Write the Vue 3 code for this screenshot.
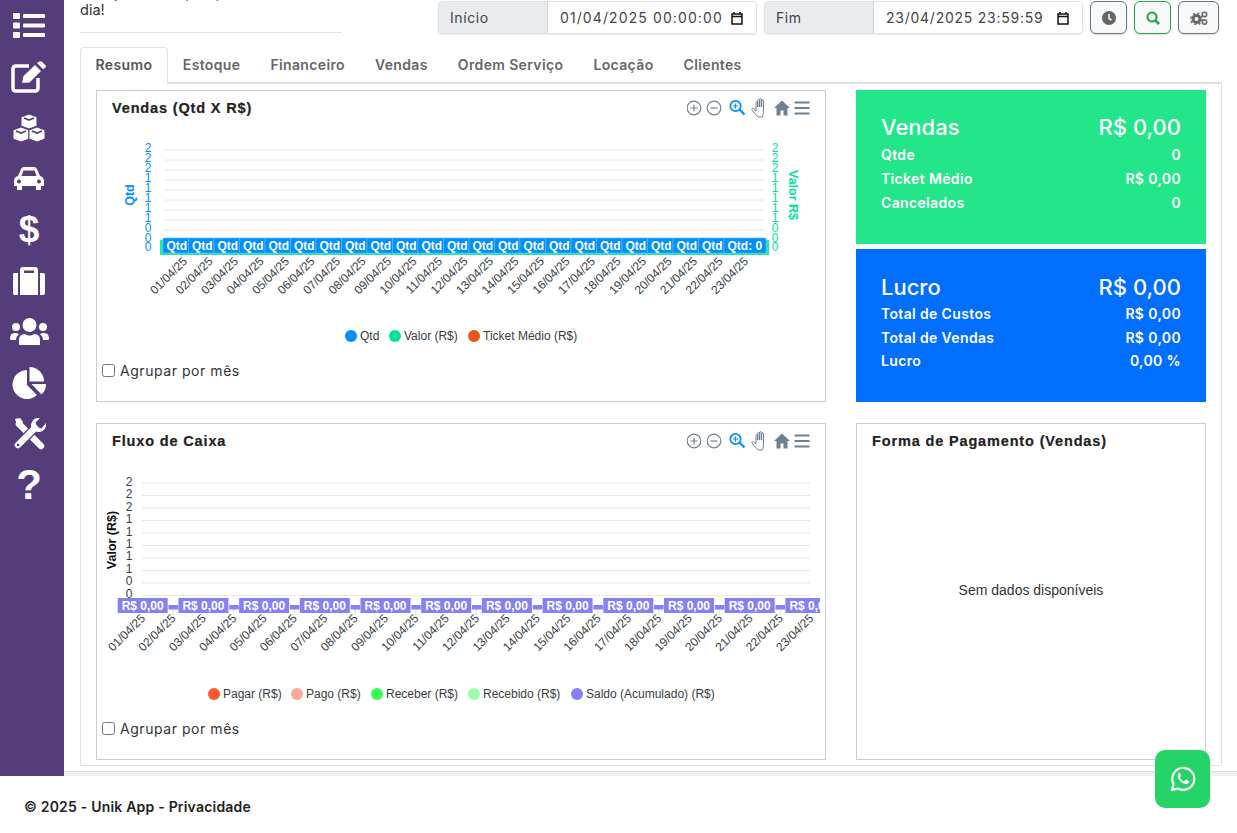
<script setup>
// as coordenadas dos gráficos seguem o viewBox de cada svg
const days = Array.from({ length: 23 }, (_, i) => String(i + 1).padStart(2, "0") + "/04/25");

const tabs = ["Resumo", "Estoque", "Financeiro", "Vendas", "Ordem Serviço", "Locação", "Clientes"];

const vendasTicks = [148, 158, 168, 178, 188, 198, 208, 218, 228, 238, 247].map((y, i) => ({
  y,
  label: ["2", "2", "2", "1", "1", "1", "1", "1", "0", "0", "0"][i],
}));
const vendasGrid = [150, 160, 170, 180, 190, 200, 210, 220, 230];
const vendasDays = days.map((d, i) => ({ d, x: 188 + i * 25.5, boxX: 163 + i * 25.5 }));
const vendasLegend = [
  { x: 351, color: "#008ffb", label: "Qtd" },
  { x: 395, color: "#00e396", label: "Valor (R$)" },
  { x: 474, color: "#e4571f", label: "Ticket Médio (R$)" },
];

const fluxoTicks = ["2", "2", "2", "1", "1", "1", "1", "1", "0", "0"].map((label, i) => ({
  label,
  y: 482 + i * 12.4,
}));
const fluxoGrid = Array.from({ length: 10 }, (_, i) => 483 + i * 12.5);
const fluxoDays = days.map((d, i) => ({ d, x: 146 + i * 30.37, boxX: 117.7 + (i / 2) * 60.7 }));
const fluxoLegend = [
  { x: 214, color: "#ff5733", label: "Pagar (R$)" },
  { x: 297, color: "#ffa899", label: "Pago (R$)" },
  { x: 377, color: "#33ff57", label: "Receber (R$)" },
  { x: 474, color: "#99ffab", label: "Recebido (R$)" },
  { x: 577, color: "#8680ff", label: "Saldo (Acumulado) (R$)" },
];

const vendasResumo = [
  ["Qtde", "0"],
  ["Ticket Médio", "R$ 0,00"],
  ["Cancelados", "0"],
];
const lucroResumo = [
  ["Total de Custos", "R$ 0,00"],
  ["Total de Vendas", "R$ 0,00"],
  ["Lucro", "0,00 %"],
];
</script>

<template>
  <svg class="defs" width="0" height="0">
    <symbol id="toolbar" viewBox="0 0 128 20">
      <g fill="none" stroke="#6e8192" stroke-width="1.2">
        <circle cx="7" cy="10" r="6.800" />
        <path d="M3.500 10h7M7 6.500v7" />
        <circle cx="27" cy="10" r="6.800" />
        <path d="M23.500 10h7" />
      </g>
      <g fill="none" stroke="#008ffb">
        <circle cx="48.500" cy="8" r="5.200" stroke-width="1.800" />
        <path d="M46 8h5M48.500 5.500v5" stroke-width="1.200" />
        <path d="M52.500 11.500l5 5" stroke-width="2.200" />
      </g>
      <path
        transform="translate(3.500 0)"
        d="M68 19c-2-1-4.500-4.500-6.500-7-.8-1 .6-2.200 1.600-1.200l2.400 2.200V4.500c0-1.400 1.800-1.400 1.800 0V9V2.300c0-1.400 1.900-1.400 1.900 0V9V1.700c0-1.400 1.900-1.400 1.900 0V9V3c0-1.400 1.900-1.400 1.900 0v10c0 2-.5 4.500-1 6z"
        fill="#fff"
        stroke="#6e8192"
        stroke-width="1"
      />
      <path d="M95 2.500L87 10h2.500v7.500h4v-5h3v5h4V10h2.500z" fill="#6e8192" />
      <path d="M107.500 4.500h15M107.500 10h15M107.500 15.500h15" stroke="#6e8192" stroke-width="2" />
    </symbol>
  </svg>

  <div class="page">
    <aside class="sidebar">
      <a class="side-item">
        <svg width="32" height="25" viewBox="0 0 32 25" fill="#fff">
          <rect x="0" y="0" width="7" height="6" rx="1" />
          <rect x="0" y="9.500" width="7" height="6" rx="1" />
          <rect x="0" y="19" width="7" height="6" rx="1" />
          <rect x="10" y="1" width="22" height="4" rx="1" />
          <rect x="10" y="10.500" width="22" height="4" rx="1" />
          <rect x="10" y="20" width="22" height="4" rx="1" />
        </svg>
      </a>
      <a class="side-item">
        <svg width="36" height="32" viewBox="0 0 36 32" fill="#fff">
          <path d="M18 5H5Q2 5 2 8v19q0 3 3 3h19q3 0 3-3V17" fill="none" stroke="#fff" stroke-width="3.500" />
          <path d="M11 22l1.500-7L24 4l6 6-11.500 11.500z" />
          <path d="M26 2l2.500-1.500q1.500-.8 2.500.2l3.500 3.500q1 1 0 2.300L32 8.200z" />
        </svg>
      </a>
      <a class="side-item">
        <svg width="32" height="28" viewBox="0 0 32 28">
          <g fill="#fff" stroke="#553c7b" stroke-width="1">
            <path d="M16 0l8 3v9l-8 3-8-3V3z" />
            <path d="M8 13l8 3v9l-8 3-8-3v-9z" />
            <path d="M24 13l8 3v9l-8 3-8-3v-9z" />
          </g>
          <g fill="none" stroke="#553c7b" stroke-width="1.800">
            <path d="M11 4l5 2 5-2M3 17l5 2 5-2M19 17l5 2 5-2" />
          </g>
        </svg>
      </a>
      <a class="side-item">
        <svg width="32" height="25" viewBox="0 0 32 25" fill="#fff">
          <path
            fill-rule="evenodd"
            d="M5 10l3-7q1-2 3-2h10q2 0 3 2l3 7q4 1 4 5v5h-3v4h-5v-4H9v4H4v-4H1v-5q0-4 4-5zM8.500 10h15l-2-5.500h-11zM6 13.500a2 2 0 1 0 .01 0zM26 13.500a2 2 0 1 0 .01 0z"
          />
        </svg>
      </a>
      <a class="side-item glyph dollar">$</a>
      <a class="side-item">
        <svg width="32" height="28" viewBox="0 0 32 28" fill="#fff">
          <path d="M1 6h4v22H1.500Q0 28 0 26V8q0-2 1-2zM27 6h3q2 0 2 2v18q0 2-2 2h-3z" />
          <path fill-rule="evenodd" d="M7 28V3q0-3 3-3h12q3 0 3 3v25zM11 3.500V6h10V3.500z" />
        </svg>
      </a>
      <a class="side-item">
        <svg width="39" height="27" viewBox="0 0 39 27" fill="#fff">
          <circle cx="19.500" cy="7" r="7" />
          <path d="M9 27v-5q0-6 6-6 2 1.500 4.500 1.500T24 16q6 0 6 6v5z" />
          <circle cx="6" cy="9" r="4" />
          <circle cx="33" cy="9" r="4" />
          <path d="M0 21q0-6 4.500-6 3 0 4.500 1-3 2.500-3 6H1.500Q0 22 0 21zM39 21q0-6-4.500-6-3 0-4.500 1 3 2.500 3 6h4.500q1.500 0 1.500-1z" />
        </svg>
      </a>
      <a class="side-item">
        <svg width="34" height="32" viewBox="0 0 34 32" fill="#fff">
          <path d="M15 3A14.500 14.500 0 1 0 25 28L15 18z" />
          <path d="M17.500 0A14.500 14.500 0 0 1 32 14.500H17.500z" />
          <path d="M19.500 17H34a14.500 14.500 0 0 1-4.500 10.500z" />
        </svg>
      </a>
      <a class="side-item">
        <svg width="33" height="32" viewBox="0 0 33 32" fill="none">
          <path d="M6 6l22 22" stroke="#fff" stroke-width="6.500" stroke-linecap="round" />
          <path d="M2 1L7 0l3 4-2 4-4-1z" fill="#fff" />
          <path d="M5 27L22 10" stroke="#553c7b" stroke-width="9" />
          <path d="M5 27L22 10" stroke="#fff" stroke-width="6.500" stroke-linecap="round" />
          <path d="M19 11a7.500 7.500 0 0 1 8-11l-4.500 4.500 1.500 4.500 4.500 1.500L33 5a7.500 7.500 0 0 1-11 8z" fill="#fff" />
          <circle cx="5" cy="27" r="1.300" fill="#553c7b" />
        </svg>
      </a>
      <a class="side-item glyph question">?</a>
    </aside>

    <main class="main">
      <header class="top">
        <p class="greeting">Desejamos um próspero<br />dia!</p>
        <div class="filters">
          <div class="date-group">
            <span class="date-label">Início</span>
            <span class="date-value">
              01/04/2025 00:00:00
              <svg width="12" height="14" viewBox="0 0 12 14"><path d="M1 3h10v10H1zM1 3h10v2.500H1zM3 1v2M9 1v2" fill="none" stroke="#111" stroke-width="1.500" /></svg>
            </span>
          </div>
          <div class="date-group">
            <span class="date-label">Fim</span>
            <span class="date-value narrow">
              23/04/2025 23:59:59
              <svg width="12" height="14" viewBox="0 0 12 14"><path d="M1 3h10v10H1zM1 3h10v2.500H1zM3 1v2M9 1v2" fill="none" stroke="#111" stroke-width="1.500" /></svg>
            </span>
          </div>
          <button class="icon-btn">
            <svg width="14" height="14" viewBox="0 0 14 14">
              <circle cx="7" cy="7" r="7" fill="#666" />
              <path d="M7 3v4.500l2.500 1.500" fill="none" stroke="#f8f9fa" stroke-width="1.500" />
            </svg>
          </button>
          <button class="icon-btn green">
            <svg width="14" height="14" viewBox="0 0 14 14" fill="none" stroke="#28a745">
              <circle cx="6" cy="6" r="4.500" stroke-width="2.200" />
              <path d="M9.500 9.500L13 13" stroke-width="2.600" />
            </svg>
          </button>
          <button class="icon-btn wide">
            <svg width="18" height="14" viewBox="0 0 18 14">
              <circle cx="6.500" cy="8" r="3.500" fill="none" stroke="#666" stroke-width="3" />
              <circle cx="6.500" cy="8" r="5.700" fill="none" stroke="#666" stroke-width="1.500" stroke-dasharray="2 2.500" />
              <circle cx="14.500" cy="3.500" r="2.200" fill="none" stroke="#666" stroke-width="1.500" />
              <circle cx="14.500" cy="11" r="2.200" fill="none" stroke="#666" stroke-width="1.500" />
            </svg>
          </button>
        </div>
      </header>

      <nav class="tabs">
        <a v-for="(t, i) in tabs" :key="t" class="tab" :class="{ active: i === 0 }">{{ t }}</a>
      </nav>

      <section class="tab-content">
        <div class="card">
          <div class="card-head">
            <h3>Vendas (Qtd X R$)</h3>
            <svg class="toolbar" width="128" height="20"><use href="#toolbar" /></svg>
          </div>
          <svg class="plot" width="728" height="232" viewBox="97 126 728 232">
            <line v-for="y in vendasGrid" :key="y" x1="165" x2="765" :y1="y" :y2="y" stroke="#e8e8e8" />
            <g class="tick" fill="#008ffb">
              <text v-for="t in vendasTicks" :key="t.y" x="148" :y="t.y + 4" text-anchor="middle">{{ t.label }}</text>
            </g>
            <g class="tick" fill="#00e396">
              <text v-for="t in vendasTicks" :key="t.y" x="775" :y="t.y + 4" text-anchor="middle">{{ t.label }}</text>
            </g>
            <text class="axis-title" x="134" y="195" text-anchor="middle" fill="#008ffb" transform="rotate(-90 134 195)">Qtd</text>
            <text class="axis-title" x="789" y="195" text-anchor="middle" fill="#00e396" transform="rotate(90 789 195)">Valor R$</text>

            <rect x="160" y="240" width="609" height="15" fill="#26e7a6" />
            <template v-for="(b, i) in vendasDays" :key="b.d">
              <rect
                :x="b.boxX"
                y="238"
                :width="i === 22 ? 42 : 25.5"
                height="15"
                fill="#008ffb"
                stroke="#66bcfd"
                stroke-width=".6"
              />
              <text class="data-label" :x="b.boxX + 3.500" y="249.500">{{ i === 22 ? "Qtd: 0" : "Qtd" }}</text>
            </template>

            <text
              v-for="b in vendasDays"
              :key="b.d"
              class="x-label"
              :x="b.x"
              y="262"
              text-anchor="end"
              :transform="`rotate(-45 ${b.x} 262)`"
            >{{ b.d }}</text>

            <g v-for="l in vendasLegend" :key="l.label">
              <circle :cx="l.x" cy="336" r="6" :fill="l.color" />
              <text class="legend" :x="l.x + 9" y="340">{{ l.label }}</text>
            </g>
          </svg>
          <label class="check"><input type="checkbox" /> Agrupar por mês</label>
        </div>

        <div class="side-stack">
          <div class="panel green">
            <div class="panel-main"><span>Vendas</span><span>R$ 0,00</span></div>
            <div v-for="r in vendasResumo" :key="r[0]" class="panel-row">
              <span>{{ r[0] }}</span><span>{{ r[1] }}</span>
            </div>
          </div>
          <div class="panel blue">
            <div class="panel-main"><span>Lucro</span><span>R$ 0,00</span></div>
            <div v-for="r in lucroResumo" :key="r[0]" class="panel-row">
              <span>{{ r[0] }}</span><span>{{ r[1] }}</span>
            </div>
          </div>
        </div>

        <div class="card">
          <div class="card-head">
            <h3>Fluxo de Caixa</h3>
            <svg class="toolbar" width="128" height="20"><use href="#toolbar" /></svg>
          </div>
          <svg class="plot" width="728" height="257" viewBox="97 459 728 257">
            <defs>
              <clipPath id="fluxo-clip"><rect x="97" y="459" width="723" height="257" /></clipPath>
            </defs>
            <line v-for="y in fluxoGrid" :key="y" x1="142" x2="810" :y1="y" :y2="y" stroke="#e8e8e8" />
            <g class="tick" fill="#373d3f">
              <text v-for="t in fluxoTicks" :key="t.y" x="129" :y="t.y + 4" text-anchor="middle">{{ t.label }}</text>
            </g>
            <text class="axis-title" x="116" y="540" text-anchor="middle" fill="#111" transform="rotate(-90 116 540)">Valor (R$)</text>

            <g clip-path="url(#fluxo-clip)">
              <template v-for="(b, i) in fluxoDays" :key="b.d">
                <template v-if="i % 2 === 0">
                  <rect :x="b.boxX" y="598" width="50" height="15" fill="#8680f5" />
                  <text class="data-label" :x="b.boxX + 4" y="609.500">R$ 0,00</text>
                </template>
                <template v-else>
                  <line :x1="b.boxX + 25" :x2="b.boxX + 25" y1="609" y2="615" stroke="#ddd" />
                  <rect :x="b.boxX + 20.500" y="605" width="9.500" height="4.500" fill="#8680f5" />
                </template>
              </template>
            </g>

            <text
              v-for="b in fluxoDays"
              :key="b.d"
              class="x-label"
              :x="b.x"
              y="619"
              text-anchor="end"
              :transform="`rotate(-45 ${b.x} 619)`"
            >{{ b.d }}</text>

            <g v-for="l in fluxoLegend" :key="l.label">
              <circle :cx="l.x" cy="694" r="6" :fill="l.color" />
              <text class="legend" :x="l.x + 9" y="698">{{ l.label }}</text>
            </g>
          </svg>
          <label class="check"><input type="checkbox" /> Agrupar por mês</label>
        </div>

        <div class="card pay">
          <div class="card-head">
            <h3>Forma de Pagamento (Vendas)</h3>
          </div>
          <div class="empty">Sem dados disponíveis</div>
        </div>
      </section>

      <div class="scroll-strip"></div>
    </main>
  </div>

  <footer class="footer">© 2025 - Unik App - Privacidade</footer>

  <a class="whats">
    <svg width="28" height="28" viewBox="0 0 28 28" fill="none">
      <path d="M3 25l1.600-6A11 11 0 1 1 9 23.500z" stroke="#fff" stroke-width="2.200" stroke-linejoin="round" />
      <path
        d="M10 8c-1.500 1-1.800 3-.5 5.500 1.500 2.800 4 5 6.500 5.500 2 .4 3.500-.6 4-2 .2-.6 0-1-.4-1.200l-2.200-1c-.5-.2-.8-.1-1.100.3l-.8 1c-.2.300-.5.300-.8.200-1.500-.7-2.800-1.900-3.600-3.400-.2-.3-.1-.5.100-.8l.7-.8c.2-.3.200-.5.100-.8l-.9-2.200c-.3-.6-1.400-.7-2.100-.3z"
        fill="#fff"
      />
    </svg>
  </a>
</template>

<style>
html,
body {
  margin: 0;
  background: #fff;
  overflow: hidden;
}
</style>

<style scoped>
.defs {
  position: absolute;
}
.page {
  display: grid;
  grid-template-columns: 64px 1fr;
  height: 776px;
  font-family: Inter, "Open Sans", sans-serif;
  overflow: hidden;
}
.sidebar {
  background: #553c7b;
  display: flex;
  flex-direction: column;
  padding-right: 6px;
}
.side-item {
  height: 51px;
  display: flex;
  align-items: center;
  justify-content: center;
  color: #fff;
}
.glyph {
  font-family: "Liberation Sans", sans-serif;
  font-weight: 700;
}
.dollar {
  font-size: 37px;
}
.question {
  font-size: 42px;
}
.main {
  min-width: 0;
  display: flex;
  flex-direction: column;
}
.top {
  height: 47px;
  display: flex;
  justify-content: space-between;
  align-items: flex-start;
  padding: 0 18px 0 16px;
}
/* a primeira linha fica acima da dobra, a página está rolada */
.greeting {
  width: 262px;
  height: 49px;
  box-sizing: border-box;
  margin: -16px 0 0;
  border-bottom: 1px solid #dee2e6;
  font-size: 14.500px;
  line-height: 17px;
  color: #333;
  white-space: nowrap;
}
.filters {
  display: flex;
  gap: 7px;
  padding-top: 1px;
}
.date-group {
  width: 319px;
  height: 33px;
  display: flex;
  box-sizing: border-box;
  border: 1px solid #dee2e6;
  border-radius: 4px;
  box-shadow: 0 1px 2px rgba(0, 0, 0, 0.1);
  font-size: 14px;
  color: #444;
  overflow: hidden;
}
.date-label {
  width: 109px;
  padding-left: 11px;
  box-sizing: border-box;
  background: #e9ecef;
  border-right: 1px solid #ced4da;
  display: flex;
  align-items: center;
  letter-spacing: 0.6px;
}
.date-value {
  flex: 1;
  display: flex;
  align-items: center;
  justify-content: space-between;
  padding: 0 13px 0 12px;
  letter-spacing: 1.100px;
  background: #fff;
}
.date-value.narrow {
  letter-spacing: 0.75px;
}
.icon-btn {
  width: 37px;
  height: 33px;
  padding: 0;
  display: flex;
  align-items: center;
  justify-content: center;
  background: #f8f9fa;
  border: 1px solid #6c757d;
  border-radius: 6px;
  box-shadow: 0 1px 2px rgba(0, 0, 0, 0.15);
}
.icon-btn.green {
  border-color: #28a745;
}
.icon-btn.wide {
  width: 41px;
}
.tabs {
  display: flex;
  height: 37px;
  margin-left: 16px;
  margin-right: 15px;
  border-bottom: 2px solid #dee2e6;
  box-sizing: border-box;
}
.tab {
  padding: 0 15px 2px;
  display: flex;
  align-items: center;
  height: 37px;
  box-sizing: border-box;
  font-size: 14px;
  font-weight: 600;
  color: #666;
  white-space: nowrap;
  letter-spacing: 0.36px;
}
.tab.active {
  background: #fff;
  border: 1px solid #dee2e6;
  border-bottom-color: #fff;
  border-radius: 4px 4px 0 0;
  padding: 0 14.500px 2px;
  color: #555;
}
.tab-content {
  margin-left: 16px;
  margin-right: 15px;
  height: 682px;
  box-sizing: border-box;
  border: 1px solid #dee2e6;
  border-top: 0;
  padding: 6px 15px 0 15px;
  display: grid;
  grid-template-columns: 730px 350px;
  grid-template-rows: 312px 337px;
  column-gap: 30px;
  row-gap: 21px;
}
.card {
  border: 1px solid #ccc;
  box-sizing: border-box;
  background: #fff;
  display: flex;
  flex-direction: column;
}
.card-head {
  height: 35px;
  flex: none;
  box-sizing: border-box;
  display: flex;
  align-items: center;
  justify-content: space-between;
  padding: 0 10px 2px 15px;
}
.card-head h3 {
  margin: 0;
  font-family: "Liberation Sans", sans-serif;
  font-size: 14.500px;
  font-weight: 700;
  color: #222;
  letter-spacing: 0.85px;
  -webkit-text-stroke: 0.2px #222;
}
.plot {
  display: block;
  flex: none;
}
.plot text {
  font-family: "Liberation Sans", sans-serif;
}
.tick text {
  font-size: 12px;
}
.axis-title {
  font-size: 12.500px;
  font-weight: 700;
}
.data-label {
  font-size: 12px;
  font-weight: 700;
  fill: #fff;
}
.x-label {
  font-size: 12px;
  fill: #373d3f;
}
.legend {
  font-size: 12px;
  fill: #373d3f;
}
.check {
  height: 26px;
  box-sizing: border-box;
  display: flex;
  align-items: center;
  gap: 5px;
  padding: 0 0 2px 5px;
  font-size: 14px;
  color: #333;
  letter-spacing: 0.55px;
}
.check input {
  margin: 0;
  width: 13px;
  height: 13px;
}
.side-stack {
  display: flex;
  flex-direction: column;
  gap: 5px;
}
.panel {
  color: #fff;
  padding: 24px 25px 0;
  font-weight: 600;
}
.panel.green {
  height: 154px;
  box-sizing: border-box;
  background: #23e68b;
}
.panel.blue {
  flex: 1;
  background: #006fff;
  padding-top: 25px;
}
.panel-main {
  display: flex;
  justify-content: space-between;
  font-size: 22px;
  font-weight: 500;
  line-height: 27px;
  margin-bottom: 2px;
}
.panel.blue .panel-main {
  margin-bottom: 1px;
}
.panel-row {
  display: flex;
  justify-content: space-between;
  font-size: 14px;
  line-height: 24px;
  letter-spacing: 0.35px;
}
.panel.blue .panel-row {
  line-height: 23.600px;
}
.pay .empty {
  flex: 1;
  display: flex;
  align-items: center;
  justify-content: center;
  padding-bottom: 39px;
  font-family: "Liberation Sans", sans-serif;
  font-size: 14px;
  color: #333;
}
.scroll-strip {
  margin-top: 5px;
  height: 5px;
  background: #f0f0f3;
  border-top: 1px solid #ddd;
}
.footer {
  height: 57px;
  box-sizing: border-box;
  padding: 22px 0 0 24px;
  font-family: Inter, "Open Sans", sans-serif;
  font-size: 14px;
  font-weight: 600;
  letter-spacing: 0.2px;
  color: #222;
}
.whats {
  position: fixed;
  left: 1155px;
  top: 750px;
  width: 55px;
  height: 58px;
  border-radius: 10px;
  background: #25d366;
  display: flex;
  align-items: center;
  justify-content: center;
}
</style>
